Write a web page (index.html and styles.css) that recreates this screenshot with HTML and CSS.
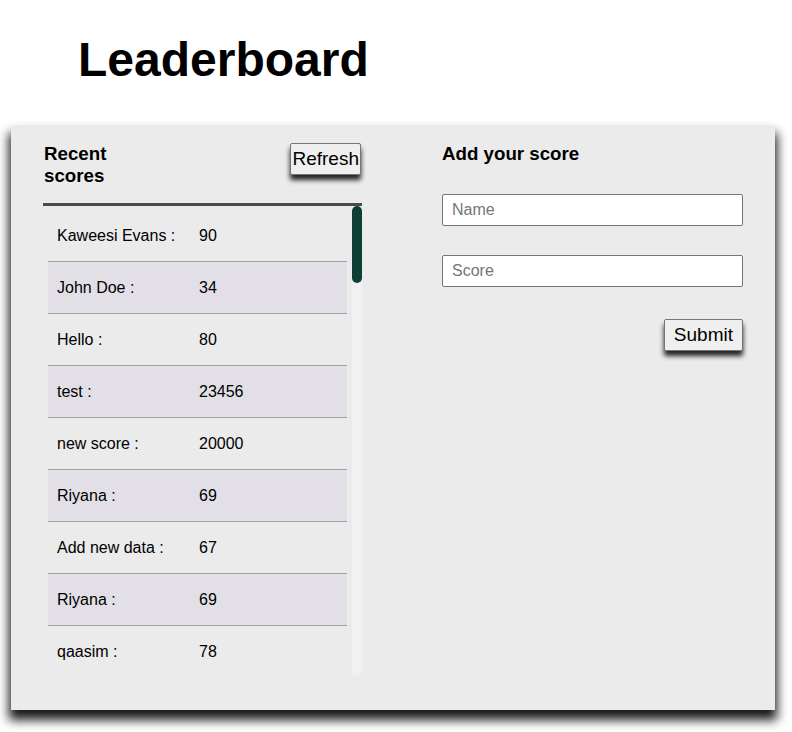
FILE: index.html
```html
<!DOCTYPE html>
<html lang="en">
<head>
    <meta charset="UTF-8">
    <meta name="viewport" content="width=device-width, initial-scale=1.0">
    <title>Leaderboard</title>
    <link rel="stylesheet" href="styles.css">
</head>
<body>
    <h1 class="title">Leaderboard</h1>

    <main class="board">
        <section class="recent">
            <div class="recent-header">
                <h3>Recent scores</h3>
                <button class="refresh-btn" type="button" onclick="renderScores()">Refresh</button>
            </div>
            <div class="list-wrap">
                <ul class="score-list" id="scoreList"></ul>
                <div class="scroll-track">
                    <div class="scroll-thumb"></div>
                </div>
            </div>
        </section>

        <section class="add-score">
            <h3>Add your score</h3>
            <form class="score-form" onsubmit="return false;">
                <input type="text" placeholder="Name">
                <input type="text" placeholder="Score">
                <button class="submit-btn" type="submit">Submit</button>
            </form>
        </section>
    </main>

    <script>
        const scores = [
            { user: 'Kaweesi Evans', score: 90 },
            { user: 'John Doe', score: 34 },
            { user: 'Hello', score: 80 },
            { user: 'test', score: 23456 },
            { user: 'new score', score: 20000 },
            { user: 'Riyana', score: 69 },
            { user: 'Add new data', score: 67 },
            { user: 'Riyana', score: 69 },
            { user: 'qaasim', score: 78 }
        ];

        function renderScores() {
            const list = document.getElementById('scoreList');
            list.innerHTML = '';
            scores.forEach((item) => {
                const li = document.createElement('li');
                li.classList.add('score-item');
                li.innerHTML = `<span class="score-user">${item.user} :</span><span class="score-value">${item.score}</span>`;
                list.appendChild(li);
            });
        }

        renderScores();
    </script>
</body>
</html>
```

FILE: styles.css
```css
body {
    font-family: "Liberation Sans", Arial, sans-serif;
    margin: 0;
    padding: 0 0 22px 0;
    background-color: #fff;
    color: #000;
}
.title {
    font-size: 48px;
    font-weight: bold;
    margin: 32px 0 40px 78px;
    line-height: 55px;
}
.board {
    margin-left: 11px;
    width: 764px;
    height: 583px;
    box-sizing: border-box;
    padding: 16px 32px 0 32px;
    background: #ebebeb;
    display: flex;
    gap: 80px;
    box-shadow: 0 8px 10px 2px rgba(0, 0, 0, 0.9);
}
.board h3 {
    margin: 0;
    font-size: 18.72px;
    line-height: 21.5px;
}
.recent {
    width: 319px;
    display: flex;
    flex-direction: column;
}
.recent-header {
    display: flex;
    justify-content: space-between;
    align-items: flex-start;
    padding: 0 0 17px 1px;
    border-bottom: 3px solid #4a4a4a;
}
.recent-header h3 {
    width: 90px;
}
.refresh-btn, .submit-btn {
    font-family: "Liberation Sans", Arial, sans-serif;
    font-size: 19px;
    line-height: 22px;
    color: #000;
    background: #efefef;
    border: 1px solid #767676;
    border-radius: 2px;
    box-shadow: 0 5px 5px rgba(0, 0, 0, 0.85);
    cursor: pointer;
}
.refresh-btn {
    margin-right: 1px;
    padding: 4px 1px;
}
.list-wrap {
    display: flex;
    height: 470px;
}
.score-list {
    flex: 1;
    list-style: none;
    margin: 0;
    padding: 4px 5px 0 5px;
    overflow: hidden;
}
.scroll-track {
    width: 10px;
    background: #f1f1f1;
    border-radius: 5px;
}
.scroll-thumb {
    height: 77px;
    background: #0e3f35;
    border-radius: 5px;
}
.score-item {
    display: flex;
    font-size: 16px;
    line-height: 19px;
    padding: 16px 9px;
    border-bottom: 1px solid #a3a3a3;
}
.score-item:nth-child(even) {
    background: #e2e0e6;
}
.score-item:last-child {
    border-bottom: none;
}
.score-user {
    width: 142px;
}
.add-score {
    width: 301px;
}
.score-form {
    display: flex;
    flex-direction: column;
    margin-top: 29px;
}
.score-form input {
    font-family: "Liberation Sans", Arial, sans-serif;
    font-size: 16px;
    height: 32px;
    box-sizing: border-box;
    padding: 0 9px;
    border: 1px solid #767676;
    border-radius: 2px;
    background: #fff;
    margin-bottom: 29px;
}
.score-form input::placeholder {
    color: #757575;
}
.submit-btn {
    align-self: flex-end;
    margin-top: 3px;
    padding: 4px 9px;
}
```
